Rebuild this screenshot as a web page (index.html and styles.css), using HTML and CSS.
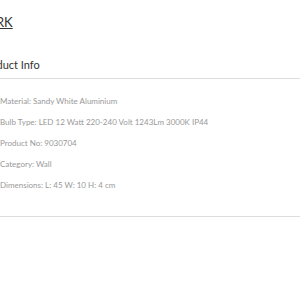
FILE: index.html
```html
<!DOCTYPE html>
<html>
<head>
<meta charset="utf-8">
<link rel="stylesheet" href="styles.css">
</head>
<body>
<div class="page">
  <h1 class="title"><a class="title-link" href="#">PARK</a></h1>
  <section class="info">
    <h2 class="info-head">Product Info</h2>
    <ul class="specs">
      <li>Material: Sandy White Aluminium</li>
      <li>Bulb Type: LED 12 Watt 220-240 Volt 1243Lm 3000K IP44</li>
      <li>Product No: 9030704</li>
      <li>Category: Wall</li>
      <li>Dimensions: L: 45 W: 10 H: 4 cm</li>
    </ul>
  </section>
</div>
</body>
</html>
```
FILE: styles.css
```css
html, body {
  margin: 0;
  padding: 0;
  background: #fff;
  overflow: hidden;
}
.page {
  margin-left: -20px;
  width: 340px;
  font-family: Lato, "Open Sans", sans-serif;
  padding-top: 14px;
}
.title {
  margin: 0;
  font-size: 13px;
  font-weight: 400;
  line-height: 16px;
}
.title-link {
  color: #333;
  text-decoration: underline;
  text-underline-offset: 1px;
}
.info {
  margin-top: 27px;
}
.info-head {
  margin: 0 0 0 -3px;
  font-size: 11px;
  font-weight: 400;
  color: #333;
  line-height: 16px;
  padding: 0 0 5px 3px;
  border-bottom: 1px solid #ddd;
}
.specs {
  list-style: none;
  margin: 0;
  padding: 17px 0 25px 20px;
  border-bottom: 1px solid #ddd;
  display: flex;
  flex-direction: column;
  gap: 10px;
}
.specs li {
  font-size: 8px;
  line-height: 11px;
  color: #999;
}
```
